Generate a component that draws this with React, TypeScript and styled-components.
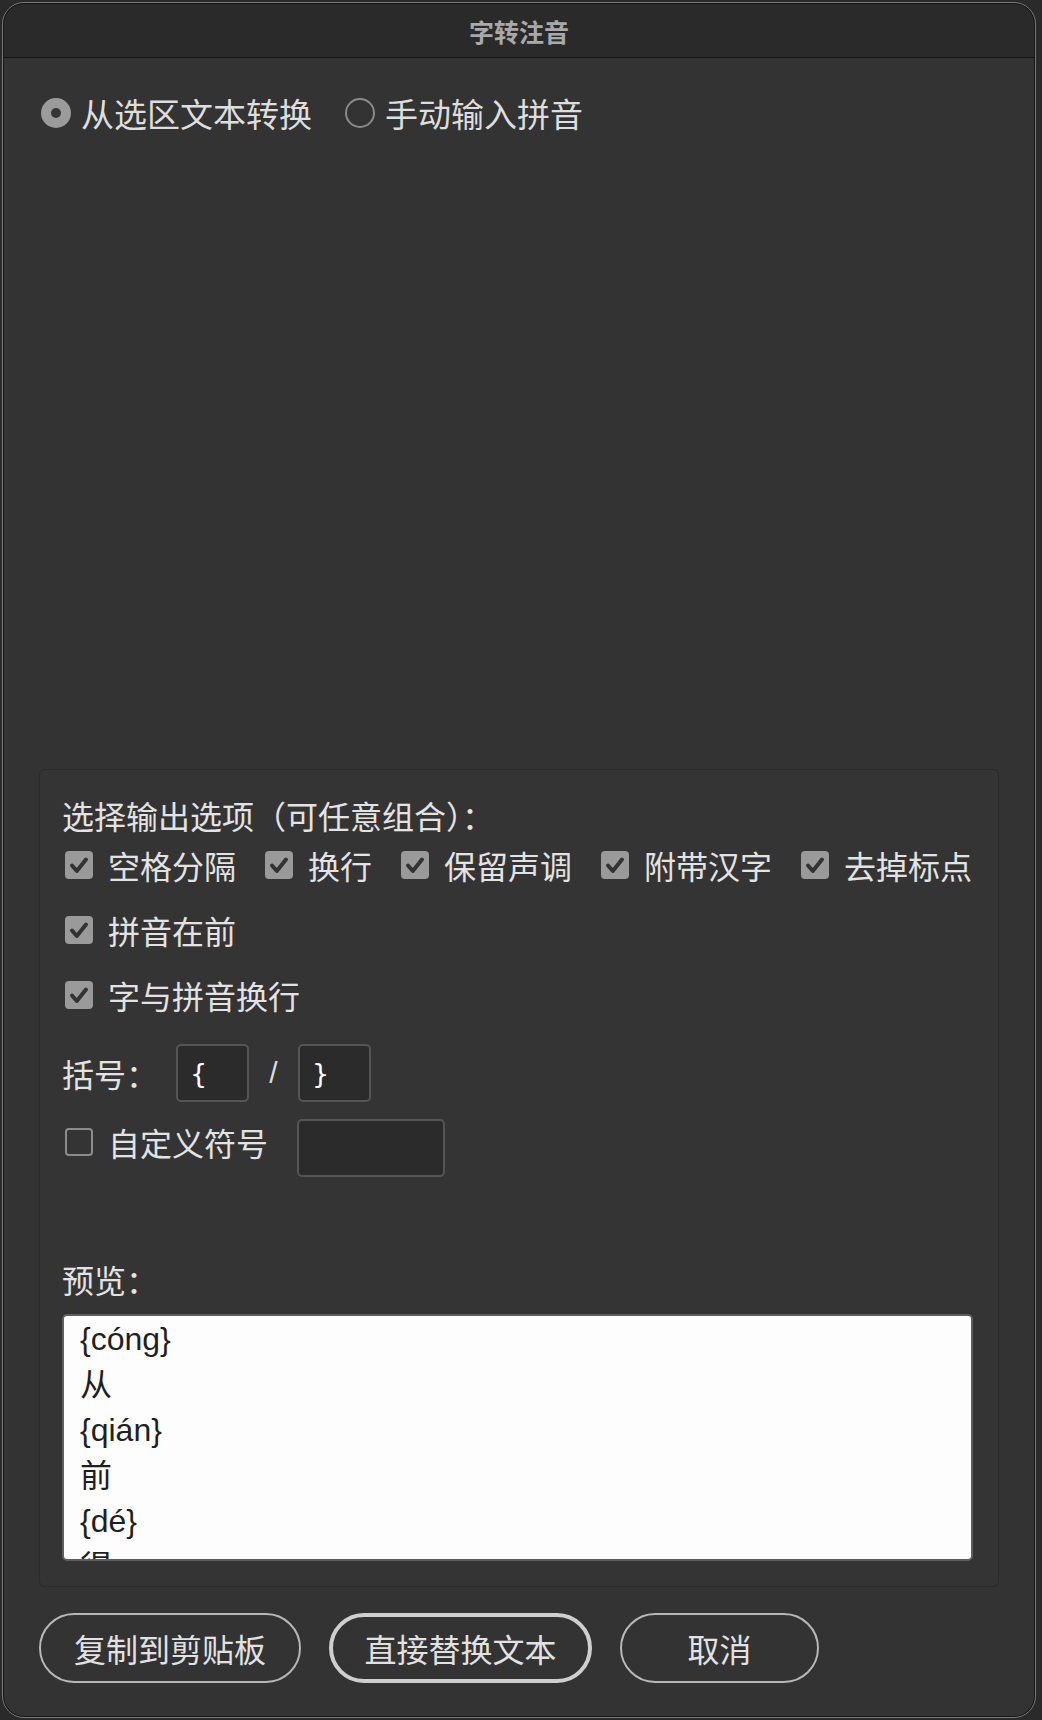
import React from "react";
import styled, { createGlobalStyle } from "styled-components";

const CJK = `"Noto Sans CJK SC", "Noto Sans", sans-serif`;

const GlobalStyle = createGlobalStyle`
  html, body { margin: 0; padding: 0; background: #2a2a2a; }
  body { font-family: ${CJK}; }
  * { box-sizing: border-box; }
`;

const Page = styled.div`
  width: 1042px;
  height: 1720px;
  padding: 2px 0 0 2px;
  background: #2a2a2a;
`;

const Window = styled.div`
  width: 1034px;
  height: 1716px;
  border: 1px solid #7a7a7a;
  padding: 1px;
  border-radius: 22px;
  background: #161616;
  display: flex;
  flex-direction: column;
  overflow: hidden;
`;

const TitleBar = styled.div`
  height: 54px;
  flex: none;
  background: #2a2a2a;
  border-bottom: 1px solid #131313;
  border-radius: 20px 20px 0 0;
  display: flex;
  align-items: center;
  justify-content: center;
  font-family: ${CJK};
  font-size: 25px;
  font-weight: 700;
  color: #a9a9a9;
`;

const Body = styled.div`
  flex: 1;
  background: #333333;
  border-radius: 0 0 20px 20px;
  padding: 31px 35px 33px;
  display: flex;
  flex-direction: column;
`;

const RadioRow = styled.div`
  height: 48px;
  flex: none;
  display: flex;
  align-items: center;
  padding-left: 2px;
`;

const RadioLabel = styled.label`
  display: flex;
  align-items: center;
  gap: 10px;
  margin-right: 33px;
  font-size: 33px;
  line-height: 48px;
  color: #dedede;
  white-space: nowrap;
`;

const RadioDot = styled.span<{ $checked?: boolean }>`
  position: relative;
  width: 30px;
  height: 30px;
  flex: none;
  border-radius: 50%;
  background: ${(p) => (p.$checked ? "#9b9b9b" : "transparent")};
  border: ${(p) => (p.$checked ? "none" : "2px solid #8a8a8a")};
  &::after {
    content: "";
    display: ${(p) => (p.$checked ? "block" : "none")};
    position: absolute;
    left: 10px;
    top: 10px;
    width: 10px;
    height: 10px;
    border-radius: 50%;
    background: #363636;
  }
`;

const Spacer = styled.div`
  flex: 1;
`;

const GroupBox = styled.div`
  height: 818px;
  flex: none;
  border: 1px solid #2b2b2b;
  border-radius: 6px;
  background: #343434;
  padding: 22px 25px 25px 22px;
  display: flex;
  flex-direction: column;
  color: #e3e3e3;
  font-size: 32px;
`;

const Heading = styled.div`
  line-height: 46px;
  white-space: nowrap;
`;

const CheckRow = styled.div<{ $mt: number }>`
  display: flex;
  align-items: center;
  height: 46px;
  margin-top: ${(p) => p.$mt}px;
  padding-left: 3px;
`;

const CheckItem = styled.label`
  display: flex;
  align-items: center;
  gap: 15px;
  margin-right: 29px;
  line-height: 46px;
  white-space: nowrap;
`;

const Box = styled.span<{ $checked?: boolean }>`
  width: 28px;
  height: 28px;
  flex: none;
  border-radius: 4px;
  background: ${(p) => (p.$checked ? "#9a9a9a" : "transparent")};
  border: ${(p) => (p.$checked ? "none" : "2px solid #8c8c8c")};
  display: flex;
  align-items: center;
  justify-content: center;
  svg {
    display: block;
  }
`;

const BracketRow = styled.div`
  display: flex;
  align-items: center;
  height: 58px;
  margin-top: 26px;
`;

const FieldLabel = styled.span`
  line-height: 46px;
  white-space: nowrap;
  margin-right: 18px;
`;

const TextField = styled.input<{ $w: number }>`
  width: ${(p) => p.$w}px;
  height: 58px;
  flex: none;
  background: #2b2b2b;
  border: 2px solid #555555;
  border-radius: 5px;
  padding: 0 0 0 12px;
  color: #ffffff;
  font-family: "DejaVu Sans", sans-serif;
  font-size: 27px;
  outline: none;
`;

const Slash = styled.span`
  width: 49px;
  text-align: center;
  font-family: "Liberation Sans", sans-serif;
  font-size: 30px;
  color: #dcdcdc;
`;

const CustomRow = styled.div`
  display: flex;
  align-items: flex-start;
  margin-top: 17px;
  padding-left: 3px;
  height: 58px;
`;

const PreviewLabel = styled.div`
  margin-top: 79px;
  line-height: 46px;
`;

const PreviewBox = styled.div`
  margin-top: 12px;
  height: 247px;
  flex: none;
  border: 2px solid #5e5e5e;
  border-radius: 5px;
  background: #fdfdfd;
  padding: 1px 16px;
  overflow: hidden;
  font-family: "Liberation Sans", ${CJK};
  font-size: 32px;
  line-height: 45.5px;
  color: #1f1f1f;
`;

const PreviewLine = styled.div`
  white-space: nowrap;
`;

const ButtonRow = styled.div`
  display: flex;
  gap: 28px;
  margin-top: 26px;
  height: 70px;
  flex: none;
`;

const Button = styled.button<{ $w: number; $primary?: boolean }>`
  width: ${(p) => p.$w}px;
  height: 70px;
  border-radius: 35px;
  border: ${(p) => (p.$primary ? "4px solid #cfcfcf" : "2px solid #b8b8b8")};
  background: transparent;
  color: #e2e2e2;
  font-family: ${CJK};
  font-size: 32px;
  padding: 0;
  cursor: pointer;
`;

const Check = () => (
  <svg width="28" height="28" viewBox="0 0 28 28">
    <path
      d="M7 14.5 L11.8 20 L21 8.5"
      fill="none"
      stroke="#333333"
      strokeWidth="4"
      strokeLinecap="round"
      strokeLinejoin="round"
    />
  </svg>
);

const CheckOption = ({ label, checked = true }: { label: string; checked?: boolean }) => (
  <CheckItem>
    <Box $checked={checked}>{checked && <Check />}</Box>
    {label}
  </CheckItem>
);

const preview = ["{cóng}", "从", "{qián}", "前", "{dé}", "得"];

export default function App() {
  return (
    <>
      <GlobalStyle />
      <Page>
        <Window>
          <TitleBar>字转注音</TitleBar>
          <Body>
            <RadioRow>
              <RadioLabel>
                <RadioDot $checked />
                从选区文本转换
              </RadioLabel>
              <RadioLabel>
                <RadioDot />
                手动输入拼音
              </RadioLabel>
            </RadioRow>
            <Spacer />
            <GroupBox>
              <Heading>选择输出选项（可任意组合）：</Heading>
              <CheckRow $mt={4}>
                <CheckOption label="空格分隔" />
                <CheckOption label="换行" />
                <CheckOption label="保留声调" />
                <CheckOption label="附带汉字" />
                <CheckOption label="去掉标点" />
              </CheckRow>
              <CheckRow $mt={19}>
                <CheckOption label="拼音在前" />
              </CheckRow>
              <CheckRow $mt={19}>
                <CheckOption label="字与拼音换行" />
              </CheckRow>
              <BracketRow>
                <FieldLabel>括号：</FieldLabel>
                <TextField $w={73} readOnly value="{" />
                <Slash>/</Slash>
                <TextField $w={73} readOnly value="}" />
              </BracketRow>
              <CustomRow>
                <CheckOption label="自定义符号" checked={false} />
                <TextField $w={148} readOnly value="" />
              </CustomRow>
              <PreviewLabel>预览：</PreviewLabel>
              <PreviewBox>
                {preview.map((l, i) => (
                  <PreviewLine key={i}>{l}</PreviewLine>
                ))}
              </PreviewBox>
            </GroupBox>
            <ButtonRow>
              <Button $w={262}>复制到剪贴板</Button>
              <Button $w={263} $primary>
                直接替换文本
              </Button>
              <Button $w={199}>取消</Button>
            </ButtonRow>
          </Body>
        </Window>
      </Page>
    </>
  );
}
